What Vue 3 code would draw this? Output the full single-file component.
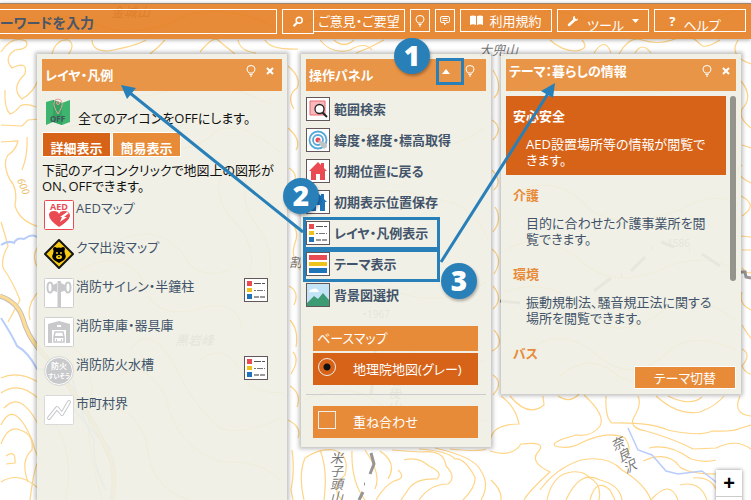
<script setup>
import { ref } from 'vue'

const keyword = ref('ーワードを入力')
const baseMap = ref('gray')
const overlay = ref(false)

const layers = [
  { id: 'aed', label: 'AEDマップ' },
  { id: 'bear', label: 'クマ出没マップ' },
  { id: 'siren', label: '消防サイレン・半鐘柱', legend: true },
  { id: 'garage', label: '消防車庫・器具庫' },
  { id: 'tank', label: '消防防火水槽', legend: true },
  { id: 'border', label: '市町村界' },
]

const actions = [
  { id: 'range', label: '範囲検索' },
  { id: 'target', label: '緯度・経度・標高取得' },
  { id: 'home', label: '初期位置に戻る' },
  { id: 'save', label: '初期表示位置保存' },
  { id: 'legend', label: 'レイヤ・凡例表示' },
  { id: 'theme', label: 'テーマ表示' },
  { id: 'picture', label: '背景図選択' },
]

const themes = [
  { title: '安心安全', text: 'AED設置場所等の情報が閲覧できます。', active: true },
  { title: '介護', text: '目的に合わせた介護事業所を閲覧できます。' },
  { title: '環境', text: '振動規制法、騒音規正法に関する場所を閲覧できます。' },
  { title: 'バス', text: '' },
]

const contours = [
  'M5 90 Q4 108 10 114 Q16 112 20 106 Q26 103 36 107',
  'M1 125 L22 126 L28 120 L40 119',
  'M1 142 L18 141 Q16 150 8 155 Q2 164 10 180 Q18 188 15 206 Q20 222 40 227',
  'M27 137 Q28 155 22 170 M1 222 Q6 238 8 246 Q1 258 3 268 Q12 280 20 300 L8 322',
  'M1 52 Q12 35 26 41 Q30 49 15 50 Q3 58 12 68 Q28 60 25 74 Q10 88 22 99 Q34 92 38 80',
  'M1 378 Q18 370 38 382 M1 393 Q20 380 40 400 M4 408 Q20 390 38 424 M1 425 Q14 398 32 440 Q36 455 40 460',
  'M1 444 Q8 425 20 430 Q34 434 32 450 Q20 460 28 482 M6 456 Q16 449 15 463 L6 464 M1 482 Q20 470 40 490',
  'M40 244 Q30 256 38 268 M40 290 Q26 304 30 320 M30 500 Q34 468 38 462',
  'M52 54 Q56 39 68 40 Q76 44 68 55 M92 40 Q92 51 108 51 Q136 46 146 40 M165 40 Q158 48 150 54',
  'M200 52 Q213 36 218 40 Q225 46 235 54 M238 40 Q240 51 256 53 M265 40 Q270 50 298 49',
  'M288 66 Q302 78 297 88 Q286 96 294 109 M288 128 Q302 140 296 150 M289 168 Q300 174 292 190',
  'M290 222 Q300 230 295 243 Q290 256 300 270 M289 286 Q300 292 294 305 M290 320 Q299 330 296 347',
  'M293 352 Q300 360 291 374 M290 386 Q302 394 297 407 M288 420 Q302 427 298 438',
  'M320 40 Q332 55 350 50 Q365 41 372 50 M334 40 Q344 49 354 40 M384 40 Q370 48 356 53',
  'M493 70 Q504 88 494 98 M492 120 Q504 128 493 140 M492 170 Q503 181 494 190 M495 207 Q503 219 493 232',
  'M492 249 Q504 259 494 274 M493 286 Q504 299 493 309 M494 330 Q506 344 492 351 M493 375 Q504 383 493 395',
  'M550 40 Q562 51 576 51 Q590 49 582 40 M594 53 Q605 36 611 53 M619 54 Q630 35 642 40 Q658 45 672 40 Q690 32 700 44 Q704 50 720 40',
  'M635 53 Q642 41 651 53 M738 40 Q728 56 751 64 M741 81 Q754 97 742 109 Q738 118 751 128 M742 145 L751 148',
  'M742 165 Q731 173 751 183 M741 196 Q759 205 742 216 M741 236 L751 237 M742 250 L751 250 M742 268 Q748 275 751 272',
  'M742 292 Q738 304 751 310 M742 325 Q748 335 751 338 M742 349 Q752 354 742 366 Q746 374 751 374',
  'M501 396 Q516 407 519 424 Q494 424 491 438 M510 396 Q528 418 544 405 L543 396',
  'M558 396 Q570 404 579 394 M584 395 Q606 415 600 426 Q592 437 576 435 Q550 442 555 446 Q568 450 581 443 Q608 430 625 438 Q632 448 627 455',
  'M606 396 Q605 418 612 423 Q650 422 668 430 Q700 437 712 431 Q734 432 741 428 L751 425',
  'M638 396 Q642 404 634 417 Q628 428 646 431 Q674 439 693 449 L716 448 Q736 438 751 449',
  'M656 396 Q678 416 700 412 Q716 406 724 396 M668 396 Q690 407 702 397 M740 396 Q732 414 751 416',
  'M491 480 Q502 490 501 500 M490 451 Q512 458 521 444 Q548 441 538 452 Q529 462 550 472 Q528 492 524 500',
  'M547 500 Q552 477 567 473 Q582 469 590 478 Q602 484 599 500 M566 500 Q580 469 600 480 Q620 485 622 500',
  'M590 500 Q596 477 610 490 L615 500 M540 490 Q556 468 581 460 Q608 455 622 470 Q645 484 651 500',
  'M643 461 Q668 450 680 467 Q689 474 716 474 M649 448 Q669 443 691 459 Q705 463 716 460 M651 500 Q670 478 678 500',
  'M680 485 Q700 480 707 500 M693 478 Q710 476 716 489',
  'M292 450 Q295 470 291 490 L293 500 M304 500 Q298 475 305 458 Q320 448 334 450 Q350 455 345 475 Q330 488 342 500',
  'M320 450 Q328 469 324 500 M352 451 Q351 482 365 500 M365 450 Q382 474 375 489 M380 451 Q398 463 388 479',
  'M404 460 Q418 456 429 466 Q444 473 437 479 Q418 478 410 487 L401 500 M392 450 Q404 451 421 452 Q444 449 446 466 Q457 477 448 484 Q430 484 419 500',
  'M419 449 Q448 451 455 459 Q464 457 475 477 Q476 487 463 500 M435 448 Q475 457 481 471 Q490 485 481 500',
  'M450 449 Q479 452 486 449 M376 500 Q385 485 394 481 Q407 478 398 470',
  'M50 60 Q96 74 110 90 Q140 104 180 86 Q212 76 270 104 M60 130 Q100 115 140 142 Q188 160 215 132 Q240 118 280 152',
  'M230 160 Q205 190 235 222 Q262 250 245 290 M250 170 Q235 200 260 230 Q280 260 262 302 M80 270 Q120 248 142 278 Q150 320 195 310 Q238 296 242 330',
  'M120 240 Q160 222 186 258 Q196 280 230 270 M130 350 Q150 320 176 368 Q190 400 215 424 Q232 440 282 418 M120 376 Q148 360 166 398 Q176 448 222 462 Q262 460 280 480',
  'M100 410 Q130 400 146 440 Q150 490 190 500 M200 360 Q224 342 240 370 Q250 396 284 392 M60 340 Q94 352 92 400 Q82 430 102 500 M52 420 Q75 450 66 500',
  'M306 70 Q345 54 368 80 Q420 100 484 75 M310 150 Q360 112 395 140 Q440 160 484 128 M360 210 Q380 180 430 198 Q474 202 488 240',
  'M320 300 Q345 272 392 290 Q440 310 486 282 M330 340 Q370 310 405 346 Q440 380 485 360 M304 400 Q350 380 380 404 Q420 440 486 420',
  'M508 90 Q550 66 594 88 Q650 102 730 76 M510 130 Q555 104 596 128 Q650 150 735 120 M520 190 Q560 174 590 210 Q620 230 680 210 Q710 190 738 204',
  'M505 250 Q540 230 578 258 Q610 290 660 270 Q700 250 738 270 M505 292 Q550 275 585 312 Q620 345 664 310 Q700 292 735 320',
  'M530 350 Q560 325 596 354 Q630 386 668 352 Q690 330 736 350 M560 376 Q590 350 618 376 Q650 395 700 370',
  'M20 30 Q60 6 100 26 Q140 40 190 14 Q230 4 276 28 M290 28 Q340 4 390 25 Q450 40 500 12 Q560 2 610 30 Q680 36 740 8',
]
</script>

<template>
  <div class="app">
    <svg class="map" viewBox="0 0 751 500" preserveAspectRatio="xMinYMin slice" aria-hidden="true">
      <rect width="751" height="500" fill="#fff" />
      <g fill="none" stroke="#ffd587" stroke-width="1.2">
        <path v-for="(d, i) in contours" :key="i" :d="d" />
      </g>
      <g fill="none" stroke="#b9cdfb" stroke-width="2">
        <path d="M1 245 Q9 240 14 243 Q17 237 24 239 Q32 233 37 237" />
        <path d="M1 318 Q12 335 17 346 Q28 352 37 369 Q60 370 73 380 Q82 420 94 440 Q92 465 106 490 M73 408 Q90 430 112 450" />
        <path d="M628 428 L638 450 L652 455 L666 471 L678 474 L702 471 L716 482" stroke-width="1.5" />
      </g>
      <path d="M0 296 Q18 302 23 319 Q27 334 38 348 Q60 372 80 402 Q98 428 112 462 Q116 480 112 500" fill="none" stroke="#c5c1b8" stroke-width="5" />
      <path d="M0 296 Q18 302 23 319 Q27 334 38 348 Q60 372 80 402 Q98 428 112 462 Q116 480 112 500" fill="none" stroke="#ffdc92" stroke-width="3" />
      <g fill="none" stroke="#969696" stroke-width="3">
        <path d="M372 344 L376 355 M374 372 L371 394 M371 453 L374 464 L370 474 M363 492 L359 500 M594 291 L611 278 M631 271 L645 257 M661 242 L674 247 M702 254 L720 266 M741 272 L745 272 L746 277 L751 278 M500 301 L520 303" />
        <path d="M364 484 h1 M621 275 h1 M652 248 h1 M689 250 h1 M501 301 h1" />
      </g>
      <g class="place">
        <text x="479" y="55" class="slant">大兜山</text>
        <text x="111" y="17" class="slant">金城山</text>
        <text x="175" y="345" class="slant">黒岩峰</text>
        <text x="289" y="267" class="slant">割</text>
        <text x="362" y="318" class="small">・1967</text>
        <text x="667" y="247" class="small">1586</text>
        <text x="336" y="452" class="vertical">米子頭山</text>
        <text x="394" y="374" class="vertical">越後山脈</text>
        <text x="614" y="438" class="vertical" transform="rotate(-28 614 438)">奈良沢</text>
      </g>
      <text x="17" y="180" class="height" transform="rotate(68 17 180)">600</text>
    </svg>

    <header class="bar">
      <input v-model="keyword" class="box keyword" aria-label="検索" type="text" />
      <div class="joined">
        <button class="box find" aria-label="検索"><svg width="12" height="12" viewBox="0 0 12 12"><circle cx="7.2" cy="4.3" r="3" fill="none" stroke="#fff" stroke-width="1.5" /><path d="M5 6.8 L1.5 10.3" stroke="#fff" stroke-width="2.2" /></svg></button>
        <button class="box opinion">ご意見・ご要望</button>
      </div>
      <button class="box square" aria-label="ヒント"><svg class="bulb" viewBox="0 0 10 12"><path d="M3 8 Q1 6 1 4 A4 3.5 0 0 1 9 4 Q9 6 7 8 Z M3.5 9.5 H6.5 M4 11 H6" /></svg></button>
      <button class="box square comment" aria-label="コメント"><svg width="10" height="10" viewBox="0 0 10 10" fill="none" stroke="#fff"><path d="M2 .5 H8 Q9.500 .5 9.500 2 V5 Q9.500 6.500 8 6.500 H6.500 L4.500 9 V6.500 H2 Q.5 6.500 .5 5 V2 Q.5 .5 2 .5 Z M2.500 2.500 H7.500 M2.500 4.500 H7.500" /></svg></button>
      <button class="box wide"><svg width="13" height="11" viewBox="0 0 13 11" fill="#fff"><path d="M0 1 Q3 0 6 1 V10 Q3 8.500 0 10 Z M7 1 Q10 0 13 1 V10 Q10 8.500 7 10 Z" /></svg>利用規約</button>
      <button class="box wide low"><svg width="12" height="12" viewBox="0 0 12 12"><path d="M2 10 L8 4.500" stroke="#fff" stroke-width="2.500" stroke-linecap="round" /><path d="M8 1 Q5.500 1 6 4 L8 6 Q11 6 11 3.500 L9 4.500 L7.700 3.200 Z" fill="#fff" /></svg><span class="drop">ツール</span><svg width="7" height="4" viewBox="0 0 7 4"><path d="M0 0 H7 L3.500 4 Z" fill="#fff" /></svg></button>
      <button class="box wide low help"><b>?</b><span class="drop">ヘルプ</span></button>
    </header>

    <main class="panels">
      <section class="panel layer-panel">
        <div class="head">
          <h2>レイヤ・凡例</h2>
          <button aria-label="ヒント"><svg class="bulb" viewBox="0 0 10 12"><path d="M3 8 Q1 6 1 4 A4 3.5 0 0 1 9 4 Q9 6 7 8 Z M3.5 9.5 H6.5 M4 11 H6" /></svg></button>
          <button aria-label="閉じる"><svg class="close" viewBox="0 0 8 8"><path d="M1 1 L7 7 M7 1 L1 7" /></svg></button>
        </div>
        <div class="all-off">
          <svg width="26" height="28" viewBox="0 0 26 28"><path d="M1 4 L8 2 L17 5 L25 2 V24 L17 27 L8 24 L1 27 Z" fill="#3db56f" /><path d="M8 2 L17 5 V27 L8 24 Z" fill="#34a463" /><path d="M13 16 Q8 8 9 5 A4 4 0 0 1 17 5 Q18 8 13 16 Z" fill="none" stroke="#e8a29b" /><circle cx="13" cy="5" r="1.5" fill="none" stroke="#e8a29b" /><text x="5" y="24" font-size="8" font-weight="700" fill="#44525c">OFF</text></svg>
          <span>全てのアイコンをOFFにします。</span>
        </div>
        <div class="tabs"><button class="on">詳細表示</button><button>簡易表示</button></div>
        <p class="note">下記のアイコンクリックで地図上の図形がON、OFFできます。</p>
        <ul class="layers">
          <li v-for="l in layers" :key="l.id">
            <svg class="layer-icon" viewBox="0 0 30 30">
              <template v-if="l.id === 'aed'">
                <rect x=".5" y=".5" width="29" height="29" rx="1" fill="#fff" stroke="#ea4b52" />
                <text x="15" y="10" text-anchor="middle" font-size="9" font-weight="700" fill="#ea4b52">AED</text>
                <path d="M15 27 Q5 20 5 15 Q5 11 10 11 Q14 11 15 14 Q16 11 20 11 Q26 11 26 16 Q25 21 15 27 Z" fill="#ea4b52" /><path d="M23 12 L16 17 H18 L16 22 L23 17 H20 L25 13 Z" fill="#fff" />
              </template>
              <template v-else-if="l.id === 'bear'">
                <path d="M15 1 L29 15 L15 29 L1 15 Z" fill="#f7ca16" stroke="#161616" stroke-width="2" stroke-linejoin="round" />
                <circle cx="11" cy="10" r="2" /><circle cx="19" cy="10" r="2" /><path d="M10 10 Q15 7 20 10 L21 15 Q23 18 20 21 L15 24 L10 21 Q7 18 9 15 Z" /><circle cx="13" cy="14" r="1" fill="#f7ca16" /><circle cx="17" cy="14" r="1" fill="#f7ca16" /><ellipse cx="15" cy="18" rx="3" ry="2" fill="#f7ca16" /><path d="M14 17 H16 L15 19 Z" />
              </template>
              <template v-else-if="l.id === 'siren'">
                <rect x=".5" y=".5" width="29" height="29" rx="1" fill="#fff" stroke="#cecfce" />
                <path d="M13.500 3 H17 V29 H13.500 Z M7 8 L13 5 V14 L7 12 Z M23 8 L17 5 V14 L23 12 Z" fill="#c7c9ca" /><ellipse cx="6" cy="9.500" rx="2.500" ry="5" fill="#fff" stroke="#c7c9ca" stroke-width="2" /><ellipse cx="24" cy="9.500" rx="2.500" ry="5" fill="#fff" stroke="#c7c9ca" stroke-width="2" />
              </template>
              <template v-else-if="l.id === 'garage'">
                <rect x=".5" y=".5" width="29" height="29" rx="1" fill="#fff" stroke="#cecfce" />
                <path d="M4 26 V7 L15 4 L26 7 V26 H22 V13 H8 V26 Z" fill="#c7c9ca" /><rect x="13" y="8" width="4" height="2" fill="#fff" /><path d="M11 15 H19 L20 20 V25 H10 V20 Z" fill="none" stroke="#c7c9ca" stroke-width="1.500" /><path d="M10 20 H20 M12 23 H13 M17 23 H18" stroke="#c7c9ca" stroke-width="2" />
              </template>
              <template v-else-if="l.id === 'tank'">
                <circle cx="15" cy="15" r="13.500" fill="#c7c9ca" stroke="#fff" /><circle cx="15" cy="15" r="14.500" fill="none" stroke="#d7d8d7" />
                <text x="15" y="13" text-anchor="middle" font-size="8" font-weight="700" fill="#fff">防火</text><text x="15" y="22" text-anchor="middle" font-size="6" font-weight="700" fill="#fff">すいそう</text>
              </template>
              <template v-else>
                <rect x=".5" y=".5" width="29" height="29" rx="1" fill="#fff" stroke="#d8d9d8" />
                <path d="M5 23 L13 13 L18 19 L25 7" fill="none" stroke="#c7c9ca" stroke-width="4" stroke-linecap="round" stroke-linejoin="round" /><path d="M5 23 L13 13 L18 19 L25 7" fill="none" stroke="#fff" stroke-width="2" stroke-linecap="round" stroke-linejoin="round" />
              </template>
            </svg>
            <span>{{ l.label }}</span>
            <button v-if="l.legend" class="legend" aria-label="凡例">
              <svg width="24" height="24" viewBox="0 0 24 24"><rect x=".5" y=".5" width="23" height="23" fill="#fff" stroke="#62575b" /><path d="M3 3 h5 v5 h-5 Z" fill="#ea4b52" /><path d="M3 10 h5 v4 h-5 Z" fill="#edc21b" /><path d="M3 16 h5 v5 h-5 Z" fill="#1e73b9" /><path d="M10 5.500 H21" stroke="#555" stroke-dasharray="7 1" /><path d="M10 12.500 H21" stroke="#777" stroke-dasharray="2 1 6 1" /><path d="M10 19 H21" stroke="#999" stroke-width="2" stroke-dasharray="5 1" /></svg>
            </button>
          </li>
        </ul>
      </section>

      <section class="panel tool-panel">
        <div class="head">
          <h2>操作パネル</h2>
          <button aria-label="折りたたむ"><svg width="8" height="5" viewBox="0 0 8 5"><path d="M0 5 L4 0 L8 5 Z" fill="#fff" /></svg></button>
          <button aria-label="ヒント"><svg class="bulb" viewBox="0 0 10 12"><path d="M3 8 Q1 6 1 4 A4 3.5 0 0 1 9 4 Q9 6 7 8 Z M3.5 9.5 H6.5 M4 11 H6" /></svg></button>
        </div>
        <ul class="actions">
          <li v-for="a in actions" :key="a.id">
            <button>
              <svg width="24" height="24" viewBox="0 0 24 24">
                <rect x=".5" y=".5" width="23" height="23" fill="#fff" stroke="#62575b" />
                <template v-if="a.id === 'range'"><path d="M4 4 H19 V18 H4 Z" fill="#f9b9bc" stroke="#ea6b70" /><circle cx="13.500" cy="12" r="4.500" fill="#fff" stroke="#222" stroke-width="1.300" /><path d="M16.500 15.500 L21 20" stroke="#222" stroke-width="2" /></template>
                <template v-else-if="a.id === 'target'"><g fill="none" stroke="#57a9d9" stroke-width="1.800"><circle cx="12" cy="12" r="8.500" /><circle cx="12" cy="12" r="5" /></g><circle cx="12" cy="12" r="2.500" fill="#ea4b52" /><path d="M12 12 L18 14 Q21 15 21 19 L18 21 L14 17 Z" fill="#bfc4c6" /></template>
                <path v-else-if="a.id === 'home' || a.id === 'save'" d="M12 3 L15 6 V4 H18 V9 L21 12 H19 V21 H14 V15 H10 V21 H5 V12 H3 Z" :fill="a.id === 'home' ? '#ea4b52' : '#1e73b9'" />
                <template v-else-if="a.id === 'legend'"><path d="M3 3 h5 v5 h-5 Z" fill="#ea4b52" /><path d="M3 10 h5 v4 h-5 Z" fill="#edc21b" /><path d="M3 16 h5 v5 h-5 Z" fill="#1e73b9" /><path d="M10 5.500 H21" stroke="#555" stroke-dasharray="7 1" /><path d="M10 12.500 H21" stroke="#777" stroke-dasharray="2 1 6 1" /><path d="M10 19 H21" stroke="#999" stroke-width="2" stroke-dasharray="5 1" /></template>
                <template v-else-if="a.id === 'theme'"><path d="M3 3 H21 V8 H3 Z" fill="#ea4b52" /><path d="M3 10 H21 V14 H3 Z" fill="#edc21b" /><path d="M3 16 H21 V21 H3 Z" fill="#1e73b9" /></template>
                <template v-else><path d="M1 1 H23 V23 H1 Z" fill="#c3e4f6" /><path d="M3 9 Q4 6 7 6 Q11 4 13 9 Z" fill="#fff" /><path d="M1 20 L8 13 L12 16 L17 10 L23 17 V23 H1 Z" fill="#3d9b74" /></template>
              </svg>
              {{ a.label }}
            </button>
          </li>
        </ul>
        <div class="maps">
          <h3>ベースマップ</h3>
          <label class="chosen"><input v-model="baseMap" type="radio" name="base" value="gray" />地理院地図(グレー)</label>
        </div>
        <hr />
        <div class="maps"><label><input v-model="overlay" type="checkbox" />重ね合わせ</label></div>
      </section>

      <section class="panel theme-panel">
        <div class="head">
          <h2>テーマ：暮らしの情報</h2>
          <button aria-label="ヒント"><svg class="bulb" viewBox="0 0 10 12"><path d="M3 8 Q1 6 1 4 A4 3.5 0 0 1 9 4 Q9 6 7 8 Z M3.5 9.5 H6.5 M4 11 H6" /></svg></button>
          <button aria-label="閉じる"><svg class="close" viewBox="0 0 8 8"><path d="M1 1 L7 7 M7 1 L1 7" /></svg></button>
        </div>
        <div class="scroller">
          <ul class="themes">
            <li v-for="t in themes" :key="t.title" :class="{ active: t.active }"><h3>{{ t.title }}</h3><p>{{ t.text }}</p></li>
          </ul>
          <div class="thumb"></div>
        </div>
        <button class="switch">テーマ切替</button>
      </section>
    </main>

    <div class="zoom"><button aria-label="拡大">+</button><button aria-label="縮小"></button></div>

    <svg class="guide" width="751" height="500" viewBox="0 0 751 500" aria-hidden="true">
      <g fill="none" stroke="#2980b9" stroke-width="3">
        <rect x="437.500" y="59.500" width="25" height="24" />
        <rect x="304.500" y="218.500" width="134" height="30" />
        <rect x="304.500" y="250.500" width="134" height="30" />
        <path d="M303 232 L130 93 M441 262 L549 92" />
      </g>
      <path d="M121 85 L136 88 L127 99 Z M555 83 L553 98 L541 91 Z" fill="#2980b9" />
    </svg>
    <span class="badge one">1</span>
    <span class="badge two">2</span>
    <span class="badge three">3</span>
  </div>
</template>

<style>
body { margin: 0; }
</style>

<style scoped>
.app {
  position: relative; display: flex; flex-direction: column; height: 100vh; overflow: hidden;
  font: 13px/16px "Open Sans", "Noto Sans CJK JP", sans-serif; font-feature-settings: "palt"; color: #43546a;
}
* { box-sizing: border-box; }
button, input { font: inherit; font-feature-settings: inherit; color: inherit; margin: 0; }
button { padding: 0; border: 0; background: none; }
ul { list-style: none; margin: 0; padding: 0; }
h2, h3, p { margin: 0; }
svg { flex: none; }
.map { position: absolute; inset: 0; width: 100%; height: 100%; }
.place { font-size: 13px; fill: #777; }
.slant { font-style: italic; }
.small { font-size: 10px; }
.vertical { writing-mode: vertical-rl; font-style: italic; }
.height { font-size: 10px; font-style: italic; fill: #eebc63; }

.bar {
  position: relative; display: flex; align-items: flex-start; gap: 5px; margin-top: 3px; padding: 5px 5px 6px 0; height: 36px;
  background: rgba(230, 128, 36, .91); border-top: 1px solid #9c8672; color: #fff; box-shadow: 0 1px 4px rgba(0, 0, 0, .35);
}
.box { display: flex; align-items: center; justify-content: center; height: 23px; border: 1px solid #fff; white-space: nowrap; }
.keyword { flex: 1; min-width: 0; height: 25px; margin-left: -1px; padding: 0; background: none; color: #4a5768; font-size: 14px; font-weight: 700; text-align: left; }
.joined { display: flex; }
.find { width: 32px; height: 25px; }
.opinion { width: 91px; border-left: 0; }
.square { width: 20px; }
.wide { width: 92px; gap: 6px; }
.low { gap: 8px; }
.help { padding-right: 10px; }
.drop { padding-top: 9px; }
.bulb { width: 10px; height: 12px; fill: none; stroke: #fff; }
.close { width: 8px; height: 8px; stroke: #fff; stroke-width: 2; }

.panels { position: relative; flex: 1; display: flex; align-items: flex-start; padding: 15px 10px 0 37px; min-height: 0; }
.panel { padding: 5px; background: rgba(238, 238, 228, .91); box-shadow: 0 0 4px 2px rgba(0, 0, 0, .25); }
.layer-panel { flex: 240; align-self: stretch; margin-right: 14px; }
.tool-panel { flex: 180; margin-right: 10px; padding-bottom: 9px; }
.theme-panel { flex: 230; }
.head { display: flex; gap: 10px; height: 32px; padding: 7px 8px 0 3px; background: rgba(230, 128, 36, .82); color: #fff; }
.head h2 { flex: 1; font-size: 13px; line-height: 18px; white-space: nowrap; }
.head button { display: flex; align-items: center; height: 10px; }
.tool-panel .head { gap: 15px; padding-right: 11px; }
.theme-panel .head { padding-right: 6px; }
.theme-panel .head h2 { line-height: 10px; }

.all-off { display: flex; align-items: center; gap: 7px; height: 41px; padding: 0 3px; color: #111; }
.all-off span { padding-top: 12px; }
.tabs { display: flex; gap: 1px; }
.tabs button { width: 69px; height: 25px; padding-top: 6px; border: 1px solid #fff; background: #e88b38; color: #fff; font-weight: 700; }
.tabs .on { background: #d66318; }
.note { padding: 5px 0 6px; color: #111; }
.layers li { display: flex; height: 39px; padding: 0 14px 0 2px; gap: 2px; }
.layer-icon { width: 30px; height: 30px; }
.layers span { flex: 1; }
.legend { height: 24px; }

.actions { padding-top: 6px; }
.actions li { height: 31px; }
.actions button { display: flex; align-items: center; gap: 4px; font-weight: 700; white-space: nowrap; }
.maps { display: grid; gap: 2px; margin: 12px 8px 0 7px; color: #fff; }
.maps h3 { height: 25px; padding: 4px; background: #e88b38; font-size: 13px; font-weight: 400; }
.maps label { display: flex; align-items: center; gap: 17px; height: 32px; padding: 0 5px; background: #e88b38; white-space: nowrap; }
.maps .chosen { background: #d66318; }
.maps input { appearance: none; flex: none; width: 18px; height: 18px; border: 1px solid #eee; margin-bottom: 4px; }
.maps input[type="radio"] { border-radius: 50%; }
.maps input[type="radio"]:checked { background: radial-gradient(circle, #111 3px, transparent 4px); }
hr { margin: 9px 0 0; border: 0; border-top: 1px solid #ccc; }
hr + .maps { margin-top: 11px; }

.scroller { display: flex; gap: 4px; height: 270px; margin-top: 5px; overflow: hidden; }
.themes { flex: 1; }
.themes li { height: 79px; padding: 12px 12px 7px 7px; }
.themes h3 { margin-bottom: 12px; color: #e88b38; font-size: 13px; line-height: 16px; }
.themes p { padding-left: 13px; }
.themes .active { background: #d66318; color: #fff; }
.themes .active h3 { color: #fff; }
.thumb { width: 6px; height: 185px; border-radius: 3px; background: #94948c; }
.switch { display: block; width: 102px; height: 23px; margin-left: auto; border: 1px solid #fff; background: #e88b38; color: #fff; }

.zoom { position: absolute; right: 9px; bottom: -24px; width: 26px; background: #fff; box-shadow: 0 0 4px rgba(0, 0, 0, .45); }
.zoom button { display: block; width: 26px; height: 27px; border-bottom: 1px solid #ccc; color: #000; font: 700 20px/24px "Liberation Sans", sans-serif; }
.guide { position: absolute; top: 0; left: 0; }
.badge {
  position: absolute; width: 36px; height: 36px; border-radius: 50%; background: #2980b9; color: #fff;
  font: 800 28px/34px "Open Sans", sans-serif; text-align: center; box-shadow: 1px 2px 3px rgba(0, 0, 0, .3);
}
.one { left: 394px; top: 38px; }
.two { left: 283px; top: 178px; }
.three { left: 441px; top: 263px; }
</style>
